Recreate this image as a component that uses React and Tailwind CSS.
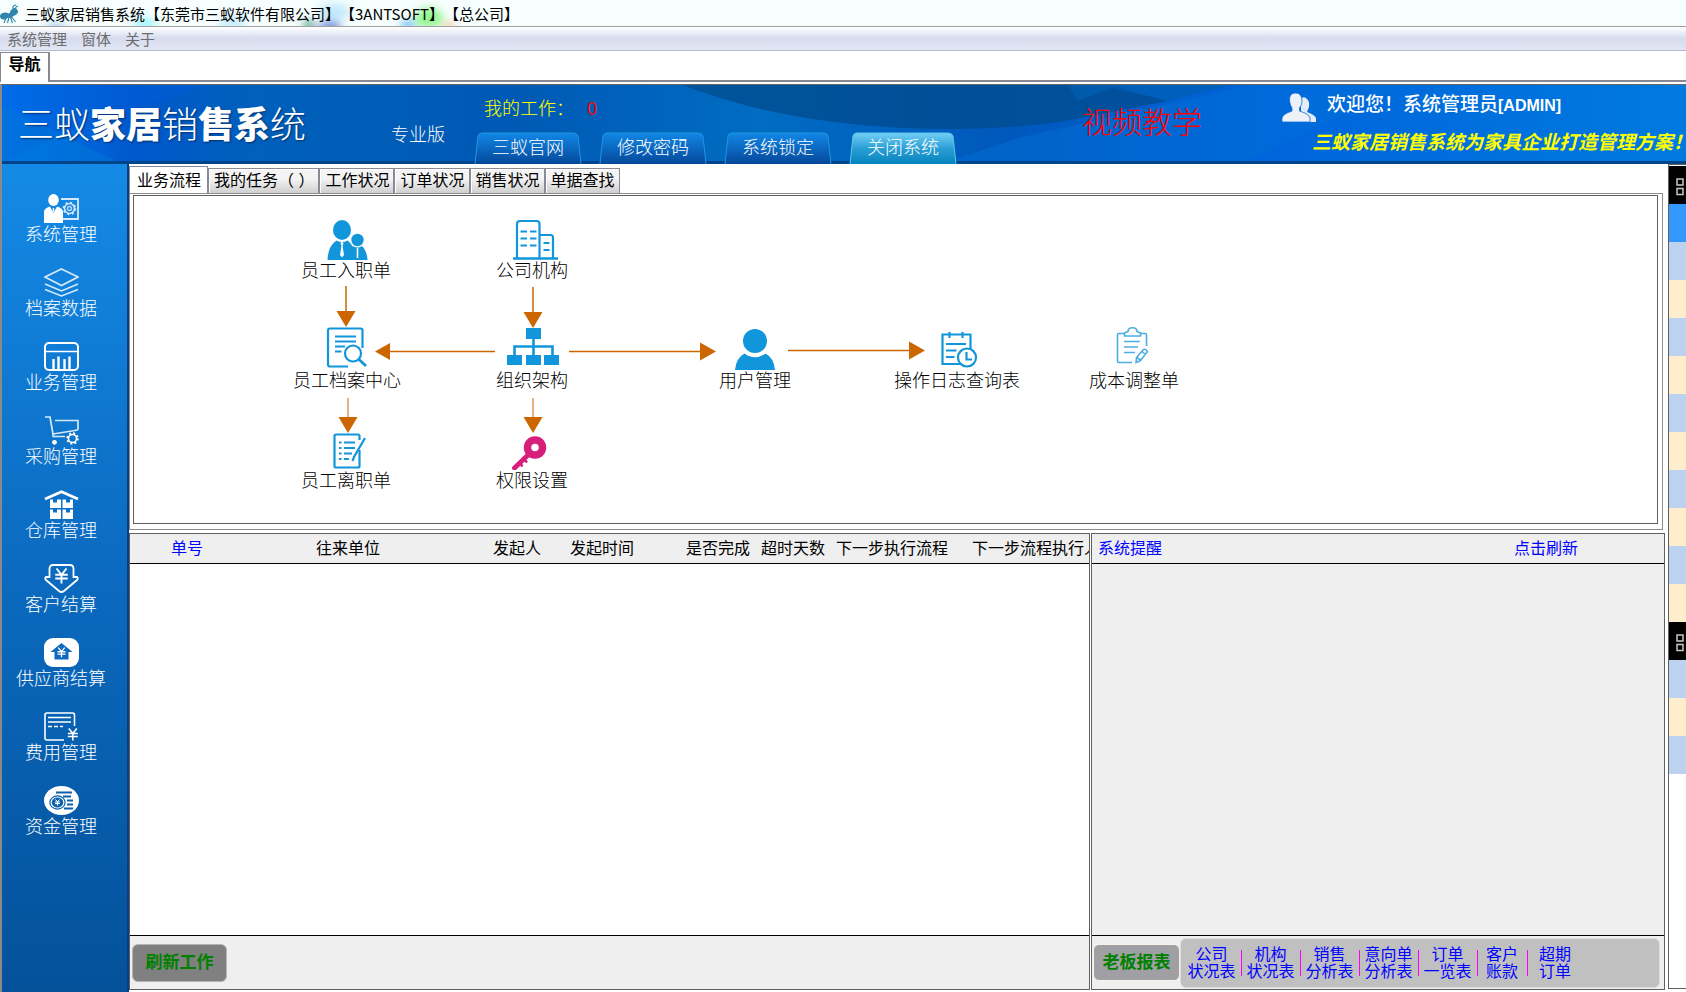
import React, { useState } from 'react';

const YEN = 'M-4 -6 L0 -1 L4 -6 M0 -1 V6 M-5 -1 H5 M-5 2 H5';

const SIDE_ITEMS = [
    { label: '系统管理', icon: <SystemIcon /> },
    { label: '档案数据', icon: <LayersIcon /> },
    { label: '业务管理', icon: <BusinessIcon /> },
    { label: '采购管理', icon: <PurchaseIcon /> },
    { label: '仓库管理', icon: <WarehouseIcon /> },
    { label: '客户结算', icon: <CustomerIcon /> },
    { label: '供应商结算', icon: <SupplierIcon /> },
    { label: '费用管理', icon: <ExpenseIcon /> },
    { label: '资金管理', icon: <FundsIcon /> },
];

const TABS = ['业务流程', '我的任务（ ）', '工作状况', '订单状况', '销售状况', '单据查找'];

// x = centre of the node, y = top of its icon, both on the flow canvas
const NODES = [
    { label: '员工入职单', x: 212, y: 20, icon: <PeopleIcon /> },
    { label: '公司机构', x: 398, y: 20, icon: <BuildingIcon /> },
    { label: '员工档案中心', x: 213, y: 130, icon: <DocSearchIcon /> },
    { label: '组织架构', x: 398, y: 130, icon: <OrgIcon /> },
    { label: '用户管理', x: 621, y: 130, icon: <UserIcon /> },
    { label: '操作日志查询表', x: 823, y: 130, icon: <LogIcon /> },
    { label: '成本调整单', x: 1000, y: 130, icon: <CostIcon /> },
    { label: '员工离职单', x: 212, y: 230, icon: <DocEditIcon /> },
    { label: '权限设置', x: 398, y: 230, icon: <KeyIcon /> },
];

const REPORTS = [
    { lines: ['公司', '状况表'], width: 'w-[59px]' },
    { lines: ['机构', '状况表'], width: 'w-[59px]' },
    { lines: ['销售', '分析表'], width: 'w-[59px]' },
    { lines: ['意向单', '分析表'], width: 'w-[59px]' },
    { lines: ['订单', '一览表'], width: 'w-[59px]' },
    { lines: ['客户', '账款'], width: 'w-[50px]' },
    { lines: ['超期', '订单'], width: 'w-[56px]' },
];

const STRIP_ROWS = [
    'black', 'select', 'blue', 'cream', 'blue', 'cream', 'blue', 'cream', 'blue', 'cream', 'blue', 'cream',
    'black', 'blue', 'cream', 'blue',
];

const STRIP_COLORS = {
    black: 'bg-black',
    select: 'bg-[#3399ff]',
    blue: 'bg-[#bcd2ef]',
    cream: 'bg-[#ffeecb]',
};

function SideSvg({ children }) {
    return (
        <svg width="35" height="29" viewBox="0 0 35 29" fill="none" stroke="#fff" strokeWidth="1.6" aria-hidden="true">
            {children}
        </svg>
    );
}

function SystemIcon() {
    return (
        <SideSvg>
            <path d="M17 5 H34 V25 H19" stroke="#d5e9fb" strokeWidth="1.8" />
            <circle cx="25.5" cy="14.5" r="5" stroke="#d5e9fb" />
            <circle cx="25.5" cy="14.5" r="6" stroke="#d5e9fb" strokeDasharray="2 2.7" />
            <circle cx="25.5" cy="14.5" r="2" stroke="#b8dafa" strokeWidth="1.4" />
            <ellipse cx="9.5" cy="6" rx="5.3" ry="6" fill="#fff" stroke="none" />
            <path d="M0 29 V18 Q0 14 6 12.5 L9.5 19 L13 12.5 Q19 14 19 18 V29 Z" fill="#fff" stroke="none" />
            <path d="M9.5 14 V18" strokeWidth="1.5" />
        </SideSvg>
    );
}

function LayersIcon() {
    return (
        <SideSvg>
            <g stroke="#d5e9fb" strokeWidth="1.6">
                <path d="M17.5 1 L34 9 L17.5 17.5 L1 9 Z" />
                <path d="M1 16 L17.5 23 L34 16 M1 21.5 L17.5 28 L34 21.5" />
            </g>
        </SideSvg>
    );
}

function BusinessIcon() {
    return (
        <SideSvg>
            <rect x="1" y="1" width="33" height="27" rx="4" strokeWidth="2" />
            <path d="M1 9.5 H34" strokeWidth="1.6" />
            <path d="M9.5 27 V17 M14.5 27 V14.5 M20.5 27 V17 M25.5 27 V14.5" strokeWidth="2.4" />
        </SideSvg>
    );
}

function PurchaseIcon() {
    return (
        <SideSvg>
            <path d="M1 1 H6 L9 18 Q8 21 11 20.5 H21" stroke="#d5e9fb" strokeWidth="1.7" />
            <path d="M11 4.5 H34 V13 Q34 14 31 14.5 L9 18" stroke="#d5e9fb" strokeWidth="1.7" />
            <circle cx="10.5" cy="26.3" r="2.4" fill="#fff" stroke="none" />
            <circle cx="28.5" cy="22.5" r="4" strokeWidth="1.6" />
            <circle cx="28.5" cy="22.5" r="5.3" strokeWidth="1.8" strokeDasharray="2 2.16" />
        </SideSvg>
    );
}

function WarehouseIcon() {
    return (
        <SideSvg>
            <path d="M1 9 L17.5 1.8 L34 9" strokeWidth="2.8" />
            <g fill="#fff" stroke="none">
                <path d="M6 9.5 H9 V12.5 H13 V9.5 H17 V18 H6 Z" />
                <path d="M18.5 9.5 H22 V12.5 H26 V9.5 H29 V18 H18.5 Z" />
                <path d="M6 19.5 H9 V22.5 H13 V19.5 H17 V29 H6 Z" />
                <path d="M18.5 19.5 H22 V22.5 H26 V19.5 H29 V29 H18.5 Z" />
            </g>
        </SideSvg>
    );
}

function CustomerIcon() {
    return (
        <SideSvg>
            <path d="M9 1 H26 Q29.5 1 29.5 5 V13 H33 Q34.5 14.5 33 16 L20 27 Q17.5 29 15 27 L2 16 Q0.5 14.5 2 13 H5.5 V5 Q5.5 1 9 1 Z" strokeWidth="1.8" />
            <path d={YEN} transform="translate(17.5 12) scale(1.25)" strokeWidth="1.5" />
        </SideSvg>
    );
}

function SupplierIcon() {
    return (
        <SideSvg>
            <rect width="35" height="29" rx="9" fill="#fff" stroke="none" />
            <path d="M6.5 14 L17.5 5 L28.5 14 H24.5 V21.5 H10.5 V14 Z" fill="#0c69bd" stroke="none" />
            <path d={YEN} transform="translate(17.5 14.5) scale(0.8)" strokeWidth="1.7" />
        </SideSvg>
    );
}

function ExpenseIcon() {
    return (
        <SideSvg>
            <path d="M30.5 14 V3 Q30.5 1 28.5 1 H3 Q1 1 1 3 V26 Q1 28 3 28 H20" strokeWidth="1.6" />
            <path d="M4 5.5 H27 M4 10 H27" strokeWidth="1.4" />
            <path d="M4 14.5 H19" strokeWidth="1.4" strokeDasharray="4 2" />
            <path d={YEN} transform="translate(28.8 22.5)" strokeWidth="1.6" />
        </SideSvg>
    );
}

function FundsIcon() {
    return (
        <SideSvg>
            <ellipse cx="17.5" cy="14.5" rx="17.5" ry="14.5" fill="#fff" stroke="none" />
            <g stroke="#0a5fae">
                <path d="M12 6.5 H28 M19 10.5 H27 M23 14.5 H29 M23 18.5 H29 M20 22.5 H29" strokeWidth="1.8" />
                <ellipse cx="13.5" cy="16.5" rx="7.6" ry="6.6" fill="#fff" strokeWidth="1.2" />
                <ellipse cx="13.5" cy="16.5" rx="5.3" ry="4.6" fill="#0a5fae" strokeWidth="1" />
            </g>
            <path d={YEN} transform="translate(13.5 16.5) scale(0.5)" strokeWidth="2" />
        </SideSvg>
    );
}

function NodeSvg({ children }) {
    return (
        <svg width="60" height="44" viewBox="0 0 60 44" fill="none" stroke="#1296db" strokeWidth="2.2" aria-hidden="true">
            {children}
        </svg>
    );
}

function PeopleIcon() {
    return (
        <NodeSvg>
            <g fill="#1296db" stroke="none">
                <ellipse cx="26" cy="14" rx="9" ry="10" />
                <circle cx="41.5" cy="24" r="6.2" />
                <path d="M11.5 44 Q12 30 20.5 24.5 Q26 27.5 31.5 24.5 Q36 28 37.5 33 Q39 44 39 44 Z" />
                <path d="M35 33 L37 30 Q41.5 33 46 30 Q51 35 51.5 44 H35 Z" />
            </g>
            <path d="M26 25.5 L27.5 27 L26.6 30 L28 39 L26 41.5 L24 39 L25.4 30 L24.5 27 Z" fill="#fff" stroke="none" />
            <path d="M41.5 32 V42" stroke="#fff" strokeWidth="1.6" />
        </NodeSvg>
    );
}

function BuildingIcon() {
    return (
        <NodeSvg>
            <path d="M15 42 V8 Q15 5 18 5 H34.5 Q37.5 5 37.5 8 V42 M37.5 19 H48.5 Q51 19 51 21.5 V42" />
            <path d="M11 42.5 H56" strokeWidth="2.4" />
            <path d="M18.5 15.5 H25 M28 15.5 H34.5 M18.5 22.5 H25 M28 22.5 H34.5 M18.5 29.5 H25 M28 29.5 H34.5 M41.5 27 H47.5 M41.5 34 H47.5" strokeWidth="2" />
        </NodeSvg>
    );
}

function DocSearchIcon() {
    return (
        <NodeSvg>
            <path d="M45.5 22 V4 Q45.5 2.5 43.5 2.5 H13 Q11 2.5 11 4.5 V38.5 Q11 40.5 13 40.5 H31" />
            <path d="M18 10.5 H39 M18 15.5 H39 M18 20.5 H28 M18 25.5 H24.5" />
            <circle cx="36" cy="27.5" r="8" fill="#fff" />
            <path d="M42 33.5 L49 40" strokeWidth="2.8" />
        </NodeSvg>
    );
}

function OrgIcon() {
    return (
        <NodeSvg>
            <g fill="#1296db" stroke="none">
                <rect x="24" y="2" width="15" height="11" />
                <rect x="5" y="29" width="15" height="10" />
                <rect x="24" y="29" width="15" height="10" />
                <rect x="42" y="29" width="15" height="10" />
            </g>
            <path d="M31.5 13 V29 M12.5 29 V20.5 H50.5 V29" strokeWidth="2.6" />
        </NodeSvg>
    );
}

function UserIcon() {
    return (
        <NodeSvg>
            <circle cx="30" cy="15" r="12" fill="#1296db" stroke="none" />
            <path d="M10 44 Q11 32 19.5 27.5 Q30 35 40.5 27.5 Q49 32 50 44 Z" fill="#1296db" stroke="none" />
        </NodeSvg>
    );
}

function LogIcon() {
    return (
        <NodeSvg>
            <path d="M33 38 H15.5 V8.5 H43.5 V24 M22.5 6 V12 M35.5 6 V12" />
            <path d="M19 18 H39 M19 24.5 H29.5 M19 31 H27.5" strokeWidth="2" />
            <circle cx="40" cy="31.5" r="9" fill="#fff" />
            <path d="M39.5 26 V33.5 H45" />
        </NodeSvg>
    );
}

function CostIcon() {
    return (
        <NodeSvg>
            <g stroke="#4aaee4" strokeWidth="1.6">
                <path d="M20 7.5 H15 Q13.5 7.5 13.5 9 V35 Q13.5 36.5 15 36.5 H28 M37 7.5 H41 Q42.5 7.5 42.5 9 V20" />
                <path d="M20.5 10 V7 L24 5.5 Q24 1.8 28.5 1.8 Q33 1.8 33 5.5 L36.5 7 V10 Z" />
                <path d="M20 15.5 H36 M20 21 H34 M20 26.5 H31" />
                <path d="M32 36.5 L32.5 31.5 L39.5 23.5 Q42 22.5 43.5 25.5 L36.5 34.5 Z M33 31.5 L36.5 34 M38 25.5 L41.5 28.5" />
            </g>
        </NodeSvg>
    );
}

function DocEditIcon() {
    return (
        <NodeSvg>
            <path d="M43.5 24 V40 Q43.5 41.5 42 41.5 H20 Q18.5 41.5 18.5 40 V10 Q18.5 8.500 20 8.5 H42 Q43.5 8.5 43.5 10 V14" />
            <path d="M28 16.5 H39 M28 22 H39 M28 27.5 H36 M28 33 H33 M23 16.5 H25.5 M23 22 H25.5 M23 27.5 H25.5 M23 33 H25.5" />
            <path d="M49 12 L38 31 L36.5 35" strokeWidth="2.2" />
        </NodeSvg>
    );
}

function KeyIcon() {
    return (
        <NodeSvg>
            <g stroke="#d81e7b">
                <circle cx="33" cy="21.5" r="7.5" strokeWidth="7.5" />
                <path d="M26 29 L12.5 42" strokeWidth="4.8" strokeLinecap="round" />
                <path d="M18 37 L20.5 40.5 M22 33 L25 36.5" strokeWidth="2.6" />
            </g>
        </NodeSvg>
    );
}

function FlowArrows() {
    return (
        <svg className="absolute left-0 top-0" width="1100" height="320" aria-hidden="true">
            <g stroke="#cc6600" strokeWidth="1.5">
                <path d="M212 90 V118 M399 91 V119" />
                <path d="M361 155.5 H250 M435 155.5 H570 M654 154.5 H778" />
            </g>
            <path d="M214 202 V224 M399 202 V224" stroke="#e5b283" strokeWidth="2" />
            <g fill="#cc6600">
                <path d="M202.5 115 H221.5 L212 131 Z" />
                <path d="M389.5 116 H408.5 L399 132 Z" />
                <path d="M204.5 221 H223.5 L214 237 Z" />
                <path d="M389.5 221 H408.5 L399 237 Z" />
                <path d="M256 147 V164 L241 155.5 Z" />
                <path d="M566 146.5 V164.5 L582 155.5 Z" />
                <path d="M775 145.5 V163.5 L791 154.5 Z" />
            </g>
        </svg>
    );
}

function AntLogo() {
    return (
        <svg width="19" height="20" viewBox="0 0 19 20" fill="none" aria-hidden="true">
            <g fill="#2f86ad">
                <ellipse cx="4.5" cy="12" rx="4.5" ry="3.3" transform="rotate(-15 4.5 12)" />
                <ellipse cx="10" cy="11.5" rx="3" ry="2.5" />
                <ellipse cx="14" cy="8" rx="4" ry="3.5" transform="rotate(-35 14 8)" />
            </g>
            <path d="M6 14 L4 19 M9 13.5 L7.5 19 M10.5 13.5 L12.5 19 M11.5 13 L15.5 18 M13 5.5 Q12 1.5 16 1 M15.5 5 Q15.5 2.5 18 2" stroke="#2f86ad" strokeWidth="1.1" />
        </svg>
    );
}

function TitleBar() {
    return (
        <div className="relative flex h-[26px] items-center overflow-hidden bg-[#f6fefe] pt-[2px] text-[15px] text-black">
            <svg className="absolute left-0 top-0" width="560" height="26" aria-hidden="true">
                <filter id="glow" x="-50%" y="-100%" width="200%" height="300%">
                    <feGaussianBlur stdDeviation="4" />
                </filter>
                <g filter="url(#glow)">
                    <ellipse cx="56" cy="27" rx="12" ry="3" fill="#8cc0ea" />
                    <ellipse cx="145" cy="24" rx="12" ry="7" fill="#a8f4fb" />
                    <ellipse cx="232" cy="23" rx="14" ry="7" fill="#c4ecfc" />
                    <ellipse cx="309" cy="25" rx="6" ry="4" fill="#2f8f6a" />
                    <ellipse cx="330" cy="26" rx="12" ry="4" fill="#4a62d4" />
                    <ellipse cx="334" cy="12" rx="16" ry="8" fill="#bfe8fb" />
                    <ellipse cx="408" cy="25" rx="8" ry="4" fill="#5ab0f0" />
                    <ellipse cx="429" cy="18" rx="14" ry="10" fill="#90f58c" />
                    <ellipse cx="449" cy="26" rx="6" ry="3" fill="#f0b070" />
                </g>
            </svg>
            <div className="relative flex items-center gap-[6px]">
                <AntLogo />
                <h1 className="whitespace-pre font-['Noto_Sans_CJK_SC',sans-serif] leading-6 [text-spacing-trim:space-all]">
                    三蚁家居销售系统【东莞市三蚁软件有限公司】【3ANTSOFT】【总公司】
                </h1>
            </div>
        </div>
    );
}

function HeaderTab({ label, active }) {
    return (
        <button type="button" className="relative h-[32px] w-[108px] text-lg font-light leading-[32px] text-white">
            <svg className="absolute inset-0 h-full w-full" viewBox="0 0 108 32" preserveAspectRatio="none" aria-hidden="true">
                <defs>
                    <linearGradient id="tabBlue" x1="0" y1="0" x2="0" y2="1">
                        <stop offset="0" stopColor="#1187e6" />
                        <stop offset="1" stopColor="#05489a" />
                    </linearGradient>
                    <linearGradient id="tabCyan" x1="0" y1="0" x2="0" y2="1">
                        <stop offset="0" stopColor="#73cff5" />
                        <stop offset="0.5" stopColor="#2a9fd6" />
                        <stop offset="1" stopColor="#0683bd" />
                    </linearGradient>
                </defs>
                <path
                    d="M1 32 L4 4 Q5 1 8 1 H99 Q103 1 104 4 L107 32"
                    fill={active ? 'url(#tabCyan)' : 'url(#tabBlue)'}
                    stroke={active ? '#5cc6ee' : '#2095dd'}
                    strokeWidth="1"
                />
            </svg>
            <span className="relative">{label}</span>
        </button>
    );
}

function Banner() {
    return (
        <header className="relative flex h-[80px] overflow-hidden border-l-2 border-t border-t-[#666] border-l-[#8a8a8a] bg-[#0062bd]">
            <svg className="absolute inset-0 h-full w-full" viewBox="0 0 1684 79" preserveAspectRatio="none" aria-hidden="true">
                <defs>
                    <linearGradient id="bannerBg" x1="0" y1="0" x2="1" y2="0">
                        <stop offset="0" stopColor="#0078f0" />
                        <stop offset="0.08" stopColor="#0058cc" />
                        <stop offset="0.15" stopColor="#0060bb" />
                        <stop offset="0.3" stopColor="#0059b4" />
                        <stop offset="0.45" stopColor="#006cc2" />
                        <stop offset="0.6" stopColor="#0058bc" />
                        <stop offset="0.75" stopColor="#0064dc" />
                        <stop offset="1" stopColor="#007ade" />
                    </linearGradient>
                    <linearGradient id="bannerArc" x1="0" y1="0" x2="1" y2="0">
                        <stop offset="0" stopColor="#00549a" />
                        <stop offset="0.6" stopColor="#004f98" />
                        <stop offset="1" stopColor="#00509e" />
                    </linearGradient>
                </defs>
                <rect width="1684" height="79" fill="url(#bannerBg)" />
                <path d="M60 48 L205 0 H0 V79 Z" fill="#005cdc" opacity="0.4" />
                <path d="M0 20 L120 79 H0 Z" fill="#0078d8" opacity="0.5" />
                <path d="M940 79 L1020 52 L1250 0 H1400 L1240 79 Z" fill="#0070d8" opacity="0.45" />
                <path d="M680 0 Q800 46 960 44 Q1040 42 1084 32 L1166 16 L1110 0 Z" fill="url(#bannerArc)" />
                <path d="M1066 0 L1076 16 L1110 3 L1166 16 L1230 0 Z" fill="#005fb4" opacity="0.7" />
                <rect y="76" width="1684" height="3" fill="#00448a" />
            </svg>
            <div className="relative w-[388px] shrink-0 pl-[16px] pt-[18px] text-4xl leading-[46px] text-white [text-shadow:1px_1px_2px_#003070]">
                <span className="font-light">三蚁</span>
                <span className="font-black">家居</span>
                <span className="font-light">销</span>
                <span className="font-black">售系</span>
                <span className="font-light">统</span>
            </div>
            <div className="relative w-[84px] shrink-0 pl-px pt-[38px] text-lg font-light leading-6 text-white">专业版</div>
            <div className="relative flex w-[608px] shrink-0 flex-col justify-between">
                <div className="flex gap-[13px] pl-[10px] pt-[12px] text-lg font-light leading-6 text-[#ffff00]">
                    <span>我的工作：</span>
                    <span className="font-normal text-[#ff0000]">0</span>
                </div>
                <nav className="flex gap-[17px]">
                    <HeaderTab label="三蚁官网" />
                    <HeaderTab label="修改密码" />
                    <HeaderTab label="系统锁定" />
                    <HeaderTab label="关闭系统" active />
                </nav>
            </div>
            <a href="#video" className="relative pt-[18px] text-3xl font-light leading-10 text-[#ff0000]">视频教学</a>
            <div className="relative ml-auto w-[404px] shrink-0">
                <div className="flex items-center gap-[11px] pt-[7px]">
                    <svg width="34" height="30" viewBox="0 0 34 30" aria-hidden="true">
                        <path d="M19 7 Q21 4 24 6 Q28 9 27 15 L25 20 Q33 23 34 26 V30 H19 Z" fill="#e4ebf5" />
                        <path d="M7.5 9 Q7 1 13.5 1 Q20 1 20 9 Q20 13 17.5 16 V19 Q27 22 28 26 V30 H0 V26 Q1 22 10 19 V16 Q8 13 7.5 9 Z" fill="#eef2f8" stroke="#0a6fd8" strokeWidth="0.8" />
                    </svg>
                    <p className="whitespace-nowrap pb-[4px] text-[19px] font-medium leading-[26px] text-white">
                        欢迎您！系统管理员<span className="text-base font-bold">[ADMIN]</span>
                    </p>
                </div>
                <p className="whitespace-nowrap pl-[30px] pt-[8px] text-[19px] font-bold italic leading-[26px] text-[#ffff00]">
                    三蚁家居销售系统为家具企业打造管理方案！
                </p>
            </div>
        </header>
    );
}

function Sidebar() {
    return (
        <nav className="w-[129px] shrink-0 border-l-2 border-[#8a8a8a] bg-linear-to-b from-[#148ae6] via-[#0b6abf] to-[#04519a]">
            <ul className="flex h-full flex-col gap-[21px] border-r-2 border-[#053f80] pt-[30px]">
                {SIDE_ITEMS.map((item) => (
                    <li key={item.label}>
                        <button type="button" className="flex w-full flex-col items-center pr-[7px] text-white">
                            {item.icon}
                            <span className="whitespace-nowrap text-lg font-light leading-6">{item.label}</span>
                        </button>
                    </li>
                ))}
            </ul>
        </nav>
    );
}

function FlowPanel() {
    const [tab, setTab] = useState(TABS[0]);

    return (
        <section className="mr-[2px]">
            <div className="flex h-[29px] items-end pt-[2px]" role="tablist">
                {TABS.map((name) => (
                    <button
                        key={name}
                        type="button"
                        role="tab"
                        aria-selected={tab === name}
                        onClick={() => setTab(name)}
                        className={`whitespace-pre border border-b-0 border-[#8a8a96] text-base ${tab === name
                            ? 'h-[27px] bg-white pl-[7px] pr-[6px] leading-[23px]'
                            : 'h-[25px] bg-linear-to-b from-[#f4f4f4] from-40% to-[#cfcfcf] pl-[5px] pr-[4px] leading-[24px] shadow-[inset_1px_1px_0_#fff]'}`}
                    >
                        {name}
                    </button>
                ))}
            </div>
            <div className="border border-[#8c8c94] p-[1px] pr-[4px] pb-[5px] pl-[3px]">
                <div className="relative h-[329px] overflow-hidden border border-[#606060] bg-white">
                    <FlowArrows />
                    {NODES.map((node) => (
                        <button
                            key={node.label}
                            type="button"
                            className="absolute flex -translate-x-1/2 flex-col items-center text-black"
                            style={{ left: node.x, top: node.y }}
                        >
                            {node.icon}
                            <span className="whitespace-nowrap text-lg font-light leading-[22px]">{node.label}</span>
                        </button>
                    ))}
                </div>
            </div>
        </section>
    );
}

function TaskPanel() {
    return (
        <section className="flex min-w-0 flex-1 flex-col border border-[#606060] bg-white">
            <div className="overflow-hidden border-b border-black bg-[#efefef]">
                <table className="w-full table-fixed text-left text-base leading-[29px] text-black">
                    <thead>
                        <tr className="[&>th]:p-0 [&>th]:font-normal [&>th]:whitespace-nowrap">
                            <th className="w-[186px]"><span className="pl-[41px] text-[#0000ff]">单号</span></th>
                            <th className="w-[177px]">往来单位</th>
                            <th className="w-[77px]">发起人</th>
                            <th className="w-[116px]">发起时间</th>
                            <th className="w-[75px]">是否完成</th>
                            <th className="w-[75px]">超时天数</th>
                            <th className="w-[136px]">下一步执行流程</th>
                            <th className="overflow-hidden">下一步流程执行人</th>
                        </tr>
                    </thead>
                </table>
            </div>
            <div className="flex-1" />
            <div className="flex h-[54px] items-center border-t border-black bg-[#efefef] pl-[2px]">
                <button type="button" className="h-[38px] w-[95px] rounded-md border border-[#b4b4b4] bg-[#808080] text-[17px] font-bold text-[#008000]">
                    刷新工作
                </button>
            </div>
        </section>
    );
}

function ReminderPanel() {
    return (
        <section className="flex w-[574px] shrink-0 flex-col border border-[#606060] bg-[#efefef]">
            <div className="flex justify-between border-b border-black pl-[6px] pr-[86px] text-base leading-[29px] text-[#0000ff]">
                <h2>系统提醒</h2>
                <button type="button">点击刷新</button>
            </div>
            <div className="flex-1" />
            <div className="flex h-[54px] items-center border-t border-black pl-[1px] pr-1">
                <button type="button" className="h-[37px] w-[87px] shrink-0 rounded-md border border-[#fbf3ea] bg-[#a0a0a4] text-[17px] font-bold text-[#008000]">
                    老板报表
                </button>
                <div className="flex h-[50px] flex-1 items-center rounded-md border border-[#dcdcdc] bg-[#c0c0c0] pl-px">
                    {REPORTS.map((report, i) => (
                        <React.Fragment key={report.lines.join('')}>
                            {i > 0 && <span className="-mr-px h-[26px] w-px shrink-0 bg-[#ff00ff]" />}
                            <button type="button" className={`shrink-0 text-base leading-[17px] text-[#0000ff] ${report.width}`}>
                                {report.lines[0]}
                                <br />
                                {report.lines[1]}
                            </button>
                        </React.Fragment>
                    ))}
                </div>
            </div>
        </section>
    );
}

function SideStrip() {
    return (
        <aside className="mb-[3px] w-[18px] shrink-0 overflow-hidden border-b border-l border-t border-[#606060] bg-white pt-px">
            {STRIP_ROWS.map((row, i) => (
                <div key={i} className={`h-[38px] pl-[7px] pt-[12px] ${STRIP_COLORS[row]}`}>
                    {row === 'black' && (
                        <svg width="9" height="18" viewBox="0 0 9 18" fill="none" stroke="#c8c8c8" strokeWidth="1.5" aria-hidden="true">
                            <rect x="1" y="1" width="6" height="6" />
                            <rect x="1" y="10.5" width="6" height="6" />
                        </svg>
                    )}
                </div>
            ))}
        </aside>
    );
}

export default function App() {
    return (
        <div className="flex min-h-screen flex-col overflow-hidden bg-white font-['Liberation_Sans','Noto_Sans_CJK_SC',sans-serif]">
            <TitleBar />
            <div className="flex h-[25px] items-center gap-[14px] border-b border-t border-b-[#b4b8cc] border-t-[#a0a0a0] bg-linear-to-b from-white via-[#d6dcee] to-[#e2e6f4] pl-[7px] pt-[3px] text-[15px] text-[#6d6d6d]">
                <button type="button">系统管理</button>
                <button type="button">窗体</button>
                <button type="button">关于</button>
            </div>
            <div className="mb-[2px] flex h-[31px] pt-px">
                <button type="button" className="w-[50px] border-l border-r-2 border-t border-[#888894] pb-[6px] text-base font-bold text-black">
                    导航
                </button>
                <div className="flex-1 border-b-2 border-[#888894]" />
            </div>
            <Banner />
            <div className="flex flex-1">
                <Sidebar />
                <main className="flex min-w-0 flex-1 flex-col pb-[2px] pr-[3px]">
                    <FlowPanel />
                    <div className="mt-[3px] flex flex-1 gap-px">
                        <TaskPanel />
                        <ReminderPanel />
                    </div>
                </main>
                <SideStrip />
            </div>
        </div>
    );
}
